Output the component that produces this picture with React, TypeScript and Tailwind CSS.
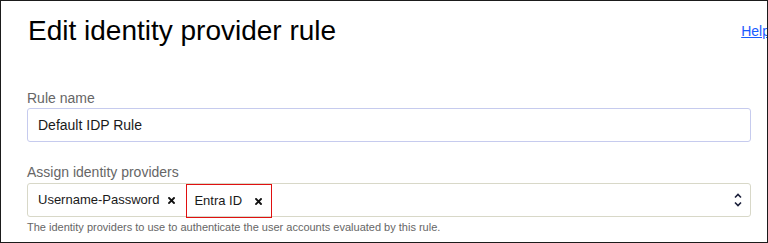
import React from 'react';

const font = { fontFamily: '"Liberation Sans", Arial, sans-serif' };

function RemoveIcon() {
  return (
    <svg width="7" height="7" viewBox="0 0 7 7" className="shrink-0">
      <path d="M1 1 L6 6 M6 1 L1 6" stroke="#111" strokeWidth="1.9" strokeLinecap="square" />
    </svg>
  );
}

function UpDownIcon() {
  return (
    <svg width="8" height="14" viewBox="0 0 8 14" className="shrink-0">
      <path d="M1 4.5 L4 1.5 L7 4.5" fill="none" stroke="#1a1f3a" strokeWidth="1.6" />
      <path d="M1 9.5 L4 12.5 L7 9.5" fill="none" stroke="#1a1f3a" strokeWidth="1.6" />
    </svg>
  );
}

export default function App() {
  const providers = [
    { id: 'up', label: 'Username-Password' },
    { id: 'entra', label: 'Entra ID' },
  ];

  return (
    <div style={font} className="w-[768px] h-[243px] border border-[#1b1b1b] bg-white overflow-hidden">
      {/* Header */}
      <div className="flex items-start justify-between pl-[27px] pt-[14px] -mr-[3px]">
        <h1 className="text-[28px] leading-[32px] text-black font-normal">Edit identity provider rule</h1>
        <a href="#" className="mt-[6px] text-[14px] leading-[20px] text-[#1a5cff] underline">
          Help
        </a>
      </div>

      <div className="pl-[26px] pr-[16px]">
        {/* Rule name */}
        <label className="block mt-[41px] text-[14px] leading-[20px] text-[#666]">Rule name</label>
        <div className="h-[34px] border border-[#c6cbee] rounded-[3px] flex items-center pl-[10px]">
          <span className="text-[14px] text-[#1a1a1a]">Default IDP Rule</span>
        </div>

        {/* Identity providers */}
        <label className="block mt-[20px] text-[14px] leading-[20px] text-[#666]">Assign identity providers</label>
        <div className="mt-[1px] h-[34px] border border-[#d8d8c8] rounded-[3px] flex items-start pl-[10px] pr-[8px]">
          <div className="flex items-center h-[32px]">
            <span className="text-[13px] text-[#1a1a1a]">{providers[0].label}</span>
            <span className="ml-[9px]"><RemoveIcon /></span>
          </div>
          <div className="ml-[11px] h-[34px] border border-[#e01010] flex items-center pl-[7px] pr-[9px]">
            <span className="text-[13px] text-[#1a1a1a]">{providers[1].label}</span>
            <span className="ml-[13px]"><RemoveIcon /></span>
          </div>
          <div className="ml-auto h-[32px] flex items-center">
            <UpDownIcon />
          </div>
        </div>
        <p className="mt-[3px] text-[11px] leading-[14px] text-[#666]">
          The identity providers to use to authenticate the user accounts evaluated by this rule.
        </p>
      </div>
    </div>
  );
}
